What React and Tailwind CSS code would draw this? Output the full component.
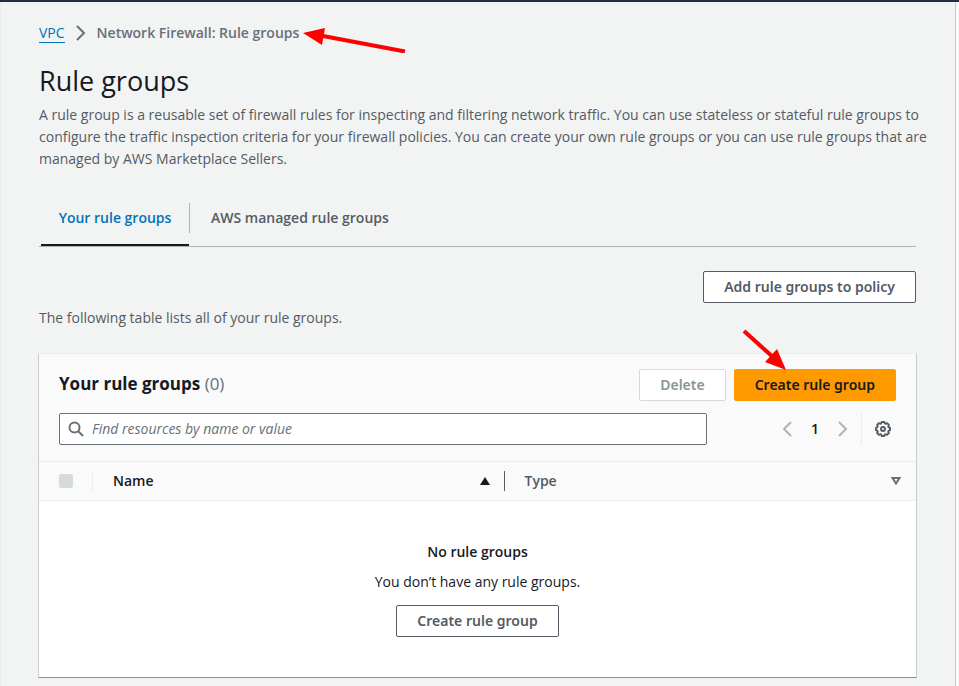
function Chevron({ flip = false, className }) {
  return (
    <svg viewBox="0 0 16 16" className={className} fill="none" stroke="currentColor" strokeWidth="2" aria-hidden="true">
      <path d={flip ? "M12 1 5 8l7 7" : "M4 1l7 7-7 7"} />
    </svg>
  );
}

function SearchIcon() {
  return (
    <svg viewBox="0 0 16 16" className="size-4 shrink-0 text-[#687078]" fill="none" stroke="currentColor" strokeWidth="2" aria-hidden="true">
      <circle cx="6.500" cy="6.500" r="5" />
      <path d="m10 10 5 5" />
    </svg>
  );
}

function GearIcon() {
  return (
    <svg viewBox="0 0 16 16" className="size-4" fill="none" stroke="currentColor" aria-hidden="true">
      <path
        d="M6.700 1h2.600l.4 1.300 1.200.5 1.200-.7 1.800 1.800-.7 1.200.5 1.200 1.300.4v2.600l-1.300.4-.5 1.200.7 1.200-1.800 1.800-1.200-.7-1.200.5-.4 1.300H6.700l-.4-1.300-1.200-.5-1.200.7-1.800-1.800.7-1.200-.5-1.200L1 9.300V6.700l1.300-.4.5-1.200-.7-1.200 1.800-1.800 1.200.7 1.200-.5z"
        strokeWidth="1.900"
        strokeLinejoin="round"
      />
      <circle cx="8" cy="8" r="2" strokeWidth="1.900" />
    </svg>
  );
}

function Button({ variant = "normal", children, ...props }) {
  const look = {
    normal: "border-[#545b64] bg-white text-[#545b64]",
    disabled: "border-[#d5dbdb] bg-white text-[#879596]",
    primary: "border-[#ff9900] bg-[#ff9900] text-[#16191f]",
  }[variant];
  return (
    <button type="button" className={`h-8 shrink-0 rounded-xs border px-5 font-['Noto_Sans','Open_Sans',sans-serif] text-sm font-semibold whitespace-nowrap ${look}`} {...props}>
      {children}
    </button>
  );
}

function Breadcrumbs() {
  return (
    <nav aria-label="Breadcrumbs" className="flex h-5 items-center text-sm">
      <a href="#vpc" className="border-b border-[#0073bb] leading-[18px] text-[#0073bb]">VPC</a>
      <Chevron className="mx-2 size-4 text-[#687078]" />
      <span className="relative font-semibold text-[#687078]">
        Network Firewall: Rule groups
        <svg viewBox="0 0 104 28" className="absolute top-0.5 left-full ml-1 h-7 w-[104px]" aria-hidden="true">
          <path d="M20 11l82 15.500" stroke="#f00" strokeWidth="4" />
          <path d="M0 8 22 3 19 20z" fill="#f00" />
        </svg>
      </span>
    </nav>
  );
}

function Tabs() {
  return (
    <div role="tablist" className="mt-5 flex h-[57px] border-b border-[#aab7b8] pl-0.5 text-sm font-semibold">
      <button type="button" role="tab" aria-selected="true" className="w-[148px] border-b-2 border-[#16191f] pt-0.5 whitespace-nowrap text-[#0073bb]">
        Your rule groups
      </button>
      <span className="mt-[13px] h-[30px] w-px bg-[#aab7b8]" />
      <button type="button" role="tab" aria-selected="false" className="border-b-2 border-transparent px-[21px] pt-0.5 text-[#545b64]">
        AWS managed rule groups
      </button>
    </div>
  );
}

function RuleGroupsTable() {
  return (
    <table className="w-full table-fixed border-collapse text-left text-sm">
      <thead className="border-y border-[#eaeded] bg-[#fafafa]">
        <tr className="h-[39px]">
          <th className="w-[54px] p-0">
            <div className="flex h-5 items-center border-r border-[#eaeded] pl-5">
              <input type="checkbox" disabled aria-label="Select all rule groups" className="size-3.5 appearance-none rounded-xs bg-[#d5dbdb]" />
            </div>
          </th>
          <th className="p-0" aria-sort="ascending">
            <div className="flex h-5 items-center justify-between border-r border-[#545b64] pr-3.5 pl-5 font-semibold text-[#16191f]">
              Name
              <svg viewBox="0 0 10 8" className="h-2 w-2.5" aria-hidden="true"><path d="M5 0l5 8H0z" fill="#16191f" /></svg>
            </div>
          </th>
          <th className="p-0">
            <div className="flex h-5 items-center justify-between pr-[15px] pl-5 font-semibold text-[#545b64]">
              Type
              <svg viewBox="0 0 10 8" className="h-2 w-2.5" aria-hidden="true"><path d="M1.500 1h7L5 6.500z" fill="none" stroke="#687078" strokeWidth="2" /></svg>
            </div>
          </th>
        </tr>
      </thead>
      <tbody>
        <tr>
          <td colSpan={3} className="p-0 pt-[41px] pb-10 text-center text-[#16191f]">
            <p className="font-semibold">No rule groups</p>
            <p className="mt-2.5 mb-[13px]">You don’t have any rule groups.</p>
            <Button>Create rule group</Button>
          </td>
        </tr>
      </tbody>
    </table>
  );
}

export default function App() {
  return (
    <div className="flex min-h-screen flex-col border-t-2 border-[#232f3e] bg-[#fafafa] font-['Open_Sans','Noto_Sans',sans-serif]">
      <main className="mr-[3px] flex-1 border-r border-l border-r-[#c4c8c9] border-l-[#eaeded] bg-[#f2f3f3] pt-[21px] pr-[39px] pb-2 pl-[38px]">
        <Breadcrumbs />
        <h1 className="mt-5 text-[27px] leading-9 text-[#16191f]">Rule groups</h1>
        <p className="mt-[5px] -mr-5 text-sm leading-[22px] text-[#545b64]">
          A rule group is a reusable set of firewall rules for inspecting and filtering network traffic. You can use stateless or stateful rule groups to configure the traffic inspection criteria for your firewall policies. You can create your own rule groups or you can use rule groups that are managed by AWS Marketplace Sellers.
        </p>
        <Tabs />
        <div className="mt-6 flex justify-end">
          <Button>Add rule groups to policy</Button>
        </div>
        <p className="mt-1 text-sm leading-[22px] text-[#545b64]">The following table lists all of your rule groups.</p>
        <section className="-mx-px mt-6 border border-t-[#eaeded] border-r-[#c8cdce] border-b-[#879596] border-l-[#c8cdce] bg-white">
          <div className="bg-[#fafafa] px-5 pt-[15px] pb-4">
            <div className="flex items-center gap-2">
              <h2 className="flex-1 pb-0.5 text-[17px] leading-[22px] font-bold text-[#16191f]">
                Your rule groups <span className="font-normal text-[#687078]">(0)</span>
              </h2>
              <Button variant="disabled" disabled>Delete</Button>
              <div className="relative">
                <Button variant="primary">Create rule group</Button>
                <svg viewBox="0 0 46 42" className="absolute -top-10 left-2 h-[42px] w-[46px]" aria-hidden="true">
                  <path d="M2 2l30 27" stroke="#f00" strokeWidth="4" />
                  <path d="M44 41 23 33 35 20z" fill="#f00" />
                </svg>
              </div>
            </div>
            <div className="mt-3 flex items-center">
              <label className="flex h-8 w-[648px] items-center gap-2 rounded-xs border border-[#687078] bg-white px-2">
                <SearchIcon />
                <input type="text" aria-label="Find resources" placeholder="Find resources by name or value" className="min-w-0 flex-1 text-sm italic outline-none placeholder:text-[#687078]" />
              </label>
              <div className="ml-auto flex h-8 items-center">
                <button type="button" disabled aria-label="Previous page" className="text-[#aab7b8]"><Chevron flip className="size-4" /></button>
                <span className="w-10 text-center text-sm font-semibold text-[#16191f]">1</span>
                <button type="button" disabled aria-label="Next page" className="text-[#aab7b8]"><Chevron className="size-4" /></button>
                <span className="ml-2.5 h-8 w-px bg-[#eaeded]" />
                <button type="button" aria-label="Preferences" className="mr-[5px] ml-[13px] text-[#545b64]"><GearIcon /></button>
              </div>
            </div>
          </div>
          <RuleGroupsTable />
        </section>
      </main>
    </div>
  );
}
